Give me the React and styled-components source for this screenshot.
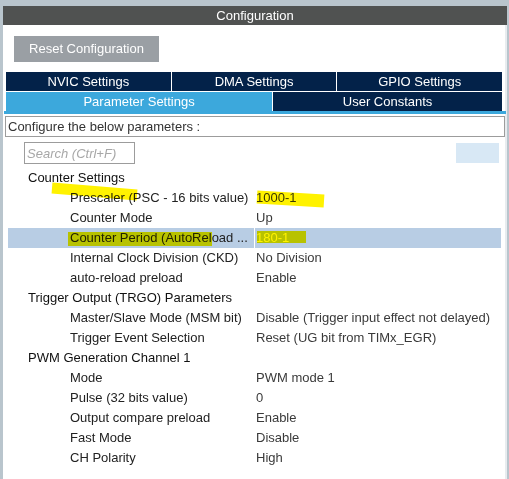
import React from "react";
import styled, { createGlobalStyle } from "styled-components";

const GlobalStyle = createGlobalStyle`
  html, body {
    margin: 0;
    padding: 0;
    background: #b9c5cd;
  }
  body {
    font-family: "Liberation Sans", Arial, sans-serif;
    font-size: 13px;
  }
`;

const rows = [
  { kind: "group", label: "Counter Settings" },
  { kind: "item", label: "Prescaler (PSC - 16 bits value)", value: "1000-1" },
  { kind: "item", label: "Counter Mode", value: "Up" },
  { kind: "item", label: "Counter Period (AutoReload ...", value: "180-1", selected: true },
  { kind: "item", label: "Internal Clock Division (CKD)", value: "No Division" },
  { kind: "item", label: "auto-reload preload", value: "Enable" },
  { kind: "group", label: "Trigger Output (TRGO) Parameters" },
  { kind: "item", label: "Master/Slave Mode (MSM bit)", value: "Disable (Trigger input effect not delayed)" },
  { kind: "item", label: "Trigger Event Selection", value: "Reset (UG bit from TIMx_EGR)" },
  { kind: "group", label: "PWM Generation Channel 1" },
  { kind: "item", label: "Mode", value: "PWM mode 1" },
  { kind: "item", label: "Pulse (32 bits value)", value: "0" },
  { kind: "item", label: "Output compare preload", value: "Enable" },
  { kind: "item", label: "Fast Mode", value: "Disable" },
  { kind: "item", label: "CH Polarity", value: "High" },
];

export default function App() {
  return (
    <>
      <GlobalStyle />
      <Page>
        <Frame>
          <Header>Configuration</Header>
          <Body>
            <ResetButton>Reset Configuration</ResetButton>
            <Tabs>
              <TabRow>
                <Tab>NVIC Settings</Tab>
                <Tab>DMA Settings</Tab>
                <Tab>GPIO Settings</Tab>
              </TabRow>
              <TabRow>
                <Tab active>Parameter Settings</Tab>
                <Tab grow={0.86}>User Constants</Tab>
              </TabRow>
            </Tabs>
            <TabLine />
            <InfoBox>Configure the below parameters :</InfoBox>
            <SearchBar>
              <SearchInput placeholder="Search (Ctrl+F)" />
              <SearchButton />
            </SearchBar>
            <Table>
              {rows.map((r, i) =>
                r.kind === "group" ? (
                  <Row key={i}>
                    <GroupLabel>{r.label}</GroupLabel>
                  </Row>
                ) : (
                  <Row key={i} selected={r.selected}>
                    <ItemLabel>{r.label}</ItemLabel>
                    <Value selected={r.selected}>{r.value}</Value>
                  </Row>
                )
              )}
            </Table>
          </Body>
        </Frame>
        <Marker width="509" height="479" viewBox="0 0 509 479">
          <path d="M52 188 L137 195" strokeWidth="11" />
          <path d="M257 197 L324 201" strokeWidth="13" />
          <path d="M68 239 L212 239" strokeWidth="14" />
          <path d="M257 237 L306 237" strokeWidth="12" />
        </Marker>
      </Page>
    </>
  );
}

const Page = styled.div`
  position: relative;
  width: 509px;
  height: 479px;
  overflow: hidden;
  padding: 6px 0 0 3px;
  box-sizing: border-box;
`;

const Frame = styled.div`
  width: 504px;
  height: 473px;
  display: flex;
  flex-direction: column;
`;

const Header = styled.div`
  height: 19px;
  line-height: 19px;
  background: #505251;
  color: #ffffff;
  text-align: center;
  font-size: 13px;
`;

const Body = styled.div`
  flex: 1;
  background: #ffffff;
  border-right: 2px solid #e8ecef;
  display: flex;
  flex-direction: column;
`;

const ResetButton = styled.div`
  margin: 11px 0 0 11px;
  width: 145px;
  height: 26px;
  line-height: 26px;
  background: #9a9fa4;
  color: #ffffff;
  text-align: center;
  font-size: 13px;
`;

const Tabs = styled.div`
  margin: 10px 0 0 3px;
  width: 496px;
  display: flex;
  flex-direction: column;
  gap: 1px;
`;

const TabRow = styled.div`
  display: flex;
  gap: 1px;
  height: 19px;
`;

const Tab = styled.div`
  flex: ${(p) => p.grow || 1};
  background: ${(p) => (p.active ? "#3ca8dc" : "#032249")};
  color: #ffffff;
  text-align: center;
  line-height: 19px;
  font-size: 13px;
`;

const TabLine = styled.div`
  margin-left: 1px;
  width: 502px;
  height: 3px;
  background: #3ca8dc;
`;

const InfoBox = styled.div`
  margin: 2px 0 0 2px;
  width: 496px;
  height: 19px;
  line-height: 19px;
  border: 1px solid #9c9c9c;
  color: #333333;
  padding-left: 2px;
  box-sizing: content-box;
  font-size: 13px;
`;

const SearchBar = styled.div`
  display: flex;
  justify-content: space-between;
  align-items: center;
  margin: 5px 0 0 21px;
  width: 475px;
`;

const SearchInput = styled.input`
  width: 111px;
  height: 22px;
  box-sizing: border-box;
  border: 1px solid #9c9c9c;
  padding: 0 2px;
  font-family: "Liberation Sans", Arial, sans-serif;
  font-size: 13px;
  outline: none;
  &::placeholder {
    color: #a7a7a7;
    font-style: italic;
  }
`;

const SearchButton = styled.div`
  width: 43px;
  height: 20px;
  background: #d8e8f5;
`;

const Table = styled.div`
  margin: 4px 0 0 5px;
  width: 493px;
  display: flex;
  flex-direction: column;
`;

const Row = styled.div`
  display: flex;
  height: 20px;
  line-height: 20px;
  background: ${(p) => (p.selected ? "#b8cde4" : "transparent")};
  color: #1a1a1a;
  font-size: 13px;
`;

const GroupLabel = styled.div`
  padding-left: 20px;
  color: #111111;
`;

const ItemLabel = styled.div`
  width: 246px;
  padding-left: 62px;
  box-sizing: border-box;
  white-space: nowrap;
  overflow: hidden;
  color: #222222;
`;

const Value = styled.div`
  flex: 1;
  border-left: 1px solid #ffffff;
  padding-left: 1px;
  color: ${(p) => (p.selected ? "#ffffff" : "#3a3a3a")};
  white-space: nowrap;
`;

const Marker = styled.svg`
  position: absolute;
  top: 0;
  left: 0;
  pointer-events: none;
  mix-blend-mode: multiply;
  path {
    stroke: #fff200;
    fill: none;
    stroke-linecap: butt;
  }
`;
